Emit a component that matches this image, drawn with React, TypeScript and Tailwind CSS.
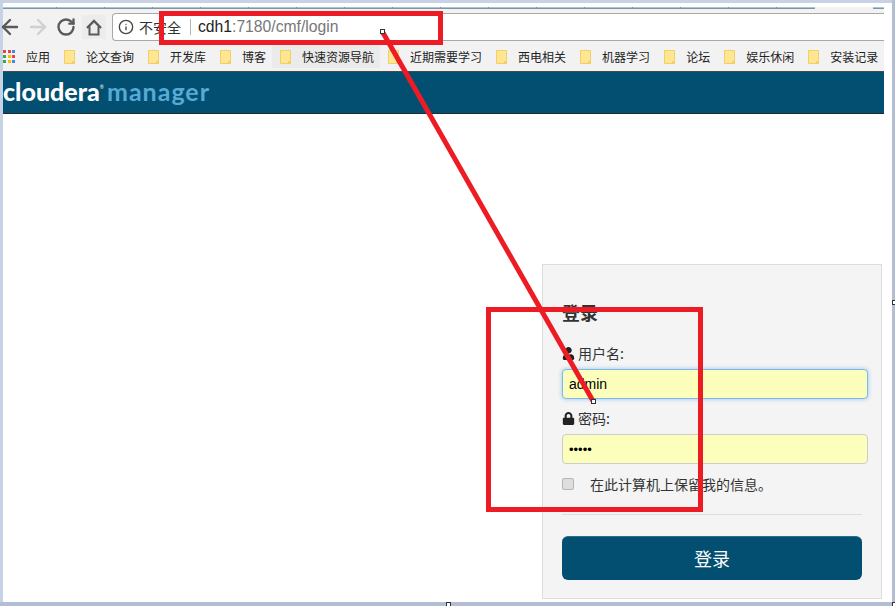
import { ArrowLeft, ArrowRight, Info, RotateCw } from 'lucide-react';
import { FaLock, FaUser } from 'react-icons/fa';

const bookmarks = ['论文查询', '开发库', '博客', '快速资源导航', '近期需要学习', '西电相关', '机器学习', '论坛', '娱乐休闲', '安装记录'];
const tabs = Array.from({ length: 15 }, (_, i) => i);

function FolderIcon() {
  return (
    <svg width="11" height="14" viewBox="0 0 11 14" className="shrink-0">
      <path d="M.5.5h10v13H.5z" fill="#ffe692" stroke="#f2cf62" />
      <path d="M8 11h3v3H8z" fill="#f2cf62" />
    </svg>
  );
}

function AppsIcon() {
  const colors = ['#e8453c', '#e8453c', '#4285f4', '#34a853', '#fbbc05', '#e8453c', '#34a853', '#fbbc05', '#4285f4'];
  return (
    <div className="grid w-[12px] grid-cols-3 gap-[2px]">
      {colors.map((color, i) => (
        <div key={i} className="h-[3px] w-[3px]" style={{ backgroundColor: color }} />
      ))}
    </div>
  );
}

function HomeIcon() {
  return (
    <svg width="16" height="17" viewBox="0 0 16 17" fill="none" stroke="#5a5a5a" strokeWidth="2">
      <path d="M1 9l7-7 7 7" strokeWidth="2.4" />
      <path d="M3.5 7.5V15.5h9V7.5" />
    </svg>
  );
}

function Handle({ className }: { className: string }) {
  return <div className={`absolute h-[5px] w-[5px] border border-[#333] bg-white ${className}`} />;
}

export default function App() {
  return (
    <div className="relative h-[606px] w-[895px] overflow-hidden bg-[#c7d2e4] pt-[3px] pr-[3px] pb-[4px] pl-[3px] font-['Noto_Sans_CJK_SC',sans-serif] shadow-[inset_-3px_-4px_0_#b3bed5]">
      <div className="flex h-full flex-col bg-white pr-[8px]">
        {/* Tab strip */}
        <div className="h-[4px] shrink-0 bg-white" />
        <div className="flex h-[2px] shrink-0 bg-[#f2f2f2]">
          <div className="h-full w-[54px] border-r border-b border-[#7a97a3] bg-[#a9c5d1]" />
          {tabs.map((i) => (
            <div key={i} className="h-full w-[48px] border-r border-b border-[#7a97a3] bg-[#a9c5d1]" />
          ))}
          <div className="h-full w-[38px] border-b border-[#7a97a3] bg-[#a9c5d1]" />
          <div className="flex-1" />
          <div className="h-full w-[11px] border-b border-[#7a97a3] bg-[#a9c5d1]" />
        </div>

        {/* Toolbar with address box */}
        <div className="flex h-[33px] shrink-0 items-end bg-[#f2f2f2] pb-px text-[#5a5a5a]">
          <div className="flex h-[28px] w-full items-center">
            <ArrowLeft size={24} strokeWidth={2.4} className="ml-[-5px] shrink-0" />
            <ArrowRight size={24} strokeWidth={2.4} className="ml-[4px] shrink-0 text-[#d0d0d0]" />
            <RotateCw size={20} strokeWidth={2.8} className="ml-[6px] shrink-0" />
            <div className="ml-[6px] flex h-[24px] w-[24px] shrink-0 items-center justify-center bg-[#ececec]">
              <HomeIcon />
            </div>
            <div className="ml-[6px] flex h-[28px] flex-1 items-center rounded-l-[4px] border-y border-l border-[#a8a8a8] bg-white pl-[5px]">
              <Info size={16} strokeWidth={2} className="shrink-0 text-[#444]" />
              <span className="ml-[5px] text-[14px] text-[#333]">不安全</span>
              <div className="mr-[7px] ml-[9px] h-[16px] w-px bg-[#b5b5b5]" />
              <span className="font-['Liberation_Sans',sans-serif] text-[15.7px] text-[#777]">
                <span className="text-[#222]">cdh1</span>:7180/cmf/login
              </span>
            </div>
          </div>
        </div>

        {/* Bookmarks */}
        <div className="flex h-[30px] shrink-0 items-center gap-[14px] border-b border-[#4a4a4a] bg-[#f2f2f2] text-[12px] text-[#222]">
          <div className="flex items-center gap-[11px]">
            <AppsIcon />
            <span>应用</span>
          </div>
          {bookmarks.map((name) => (
            <div
              key={name}
              className={
                name === '快速资源导航'
                  ? 'mr-[-6px] ml-[-8px] flex h-[23px] items-center gap-[11px] bg-[#ebebeb] pr-[6px] pl-[8px]'
                  : 'flex items-center gap-[11px]'
              }
            >
              <FolderIcon />
              <span className="whitespace-nowrap">{name}</span>
            </div>
          ))}
        </div>

        {/* Header */}
        <div className="flex h-[42px] shrink-0 items-center border-b border-[#1d2b33] bg-[#034f72] pb-[2px] font-['Lato',sans-serif] text-[25px] leading-none font-black">
          <span className="text-white">cloudera</span>
          <span className="mb-[8px] text-[5px] font-normal text-white">®</span>
          <span className="ml-[3px] font-bold tracking-[1px] text-[#55abd6]">manager</span>
        </div>

        {/* Page */}
        <div className="flex flex-1 flex-col items-end justify-end bg-white pr-[2px] pb-[3px]">
          <div className="h-[335px] w-[340px] border border-[#ddd] bg-[#f4f4f4] pt-[35px] pl-[19px] text-[14px] text-[#333]">
            <h1 className="text-[18px] leading-[24px] font-bold">登录</h1>
            <label className="mt-[19px] flex h-[20px] items-center gap-[3px]">
              <FaUser size={13} className="text-[#222]" />
              用户名:
            </label>
            <div className="mt-[6px] flex h-[30px] w-[306px] items-center rounded-[4px] border border-[#7cb9e8] bg-[#fbffbb] pl-[6px] font-['Liberation_Sans',sans-serif] text-[14px] text-black shadow-[0_0_4px_rgba(82,168,236,0.6)]">
              admin
            </div>
            <label className="mt-[9px] flex h-[20px] items-center gap-[3px]">
              <FaLock size={13} className="text-[#222]" />
              密码:
            </label>
            <div className="mt-[6px] flex h-[30px] w-[306px] items-center rounded-[4px] border border-[#ccc] bg-[#fbffbb] pl-[6px] font-['Liberation_Sans',sans-serif] text-[13px] leading-none text-black">
              •••••
            </div>
            <div className="mt-[10px] flex h-[20px] items-center">
              <div className="h-[12px] w-[12px] rounded-[2px] border border-[#b5b5b5] bg-[#dedede]" />
              <span className="ml-[16px]">在此计算机上保留我的信息。</span>
            </div>
            <div className="mt-[20px] h-px w-[300px] bg-[#ddd]" />
            <button className="mt-[21px] h-[44px] w-[300px] rounded-[6px] border-t border-[#2f6d8b] bg-[#034f72] text-[18px] text-white">
              登录
            </button>
          </div>
        </div>
      </div>

      {/* Annotations drawn over the screenshot */}
      <div className="absolute top-[11px] left-[159px] h-[34px] w-[284px] border-[5px] border-[#ed1c24]" />
      <div className="absolute top-[307px] left-[486px] h-[205px] w-[217px] border-[5px] border-[#ed1c24]" />
      <svg className="absolute top-0 left-0" width="895" height="606">
        <line x1="382" y1="31" x2="593" y2="401" stroke="#ed1c24" strokeWidth="5" />
      </svg>
      <Handle className="top-[29px] left-[380px]" />
      <Handle className="top-[399px] left-[591px]" />
      <Handle className="top-[300px] left-[892px]" />
      <Handle className="top-[602px] left-[446px]" />
      <Handle className="top-[602px] left-[892px]" />
    </div>
  );
}
